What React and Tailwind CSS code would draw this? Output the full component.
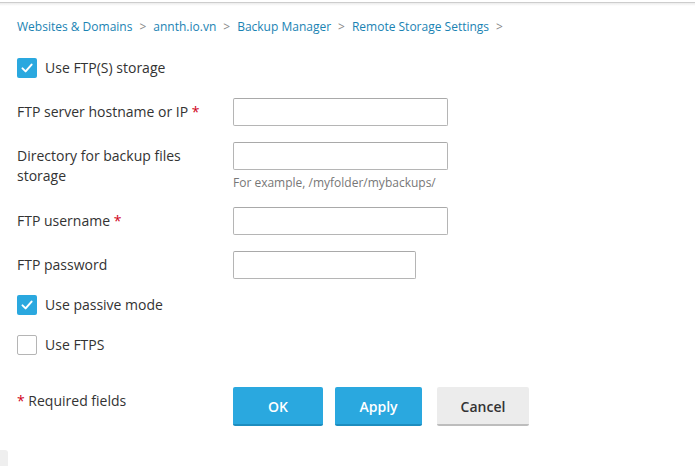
const crumbs = ['Websites & Domains', 'annth.io.vn', 'Backup Manager', 'Remote Storage Settings'];

function Check({ checked, label }) {
  return (
    <label className="flex h-5 items-center gap-[8px]">
      {checked ? (
        <span className="flex h-5 w-5 items-center justify-center rounded-[2px] bg-[#2aa8df]">
          <svg width="14" height="14" viewBox="0 0 14 14" fill="none">
            <path d="M2.5 7.4 5.6 10.4 11.6 3.6" stroke="#fff" strokeWidth="2" strokeLinecap="round" strokeLinejoin="round" />
          </svg>
        </span>
      ) : (
        <span className="h-5 w-5 rounded-[2px] border border-[#b5b5b5] bg-white" />
      )}
      <span className="text-[14px] leading-5 text-[#333]">{label}</span>
    </label>
  );
}

function Field({ label, required, width = 'w-[215px]', hint, mt }) {
  return (
    <div className={`flex items-start ${mt}`}>
      <div className="w-[216px] shrink-0 pr-4 pt-[4px] text-[14px] leading-5 text-[#333]">
        {label}
        {required && <span className="text-[#d0021b]"> *</span>}
      </div>
      <div>
        <input className={`${width} block h-[28px] rounded-[2px] border border-[#b5b5b5] border-t-[#a9a9a9] bg-white px-2 outline-none`} />
        {hint && <div className="mt-[5px] text-[12px] leading-4 text-[#777]">{hint}</div>}
      </div>
    </div>
  );
}

export default function App() {
  return (
    <div className="relative h-[466px] w-[695px] overflow-hidden bg-white font-['Open_Sans',sans-serif]">
      <div className="mt-[2px] h-[1px] bg-[#cdcdcd]" />
      <div className="h-[3px] bg-gradient-to-b from-[#ececec] to-white" />

      <div className="px-[17px]">
        <nav className="mt-[12px] flex items-center text-[12px] leading-[18px]">
          {crumbs.map((c) => (
            <span key={c} className="flex items-center">
              <span className="text-[#1a83b3]">{c}</span>
              <span className="mx-[7px] text-[#888]">&gt;</span>
            </span>
          ))}
        </nav>

        <div className="mt-[22px]">
          <Check checked label="Use FTP(S) storage" />
        </div>

        <Field mt="mt-[20px]" label="FTP server hostname or IP" required />
        <Field
          mt="mt-[16px]"
          label="Directory for backup files storage"
          hint="For example, /myfolder/mybackups/"
        />
        <Field mt="mt-[16px]" label="FTP username" required />
        <Field mt="mt-[16px]" label="FTP password" width="w-[183px]" />

        <div className="mt-[16px]">
          <Check checked label="Use passive mode" />
        </div>
        <div className="mt-[20px]">
          <Check label="Use FTPS" />
        </div>

        <div className="mt-[32px] flex items-start">
          <div className="w-[216px] shrink-0 pt-[4px] text-[14px] leading-5 text-[#333]">
            <span className="text-[#d0021b]">*</span> Required fields
          </div>
          <div className="flex gap-[12px]">
            <button className="h-[39px] w-[90px] rounded-[2px] border-b-2 border-[#1d8dbf] bg-[#2aa8df] pt-[1px] text-[14px] font-semibold text-white">
              OK
            </button>
            <button className="h-[39px] w-[87px] rounded-[2px] border-b-2 border-[#1d8dbf] bg-[#2aa8df] pt-[1px] text-[14px] font-semibold text-white">
              Apply
            </button>
            <button className="ml-[3px] h-[39px] w-[92px] rounded-[2px] border-b-2 border-[#bdbdbd] bg-[#ececec] pt-[1px] text-[14px] font-semibold text-[#333]">
              Cancel
            </button>
          </div>
        </div>
      </div>

      <div className="absolute bottom-0 left-0 h-[16px] w-[8px] rounded-tr-[3px] bg-[#efefef]" />
    </div>
  );
}
